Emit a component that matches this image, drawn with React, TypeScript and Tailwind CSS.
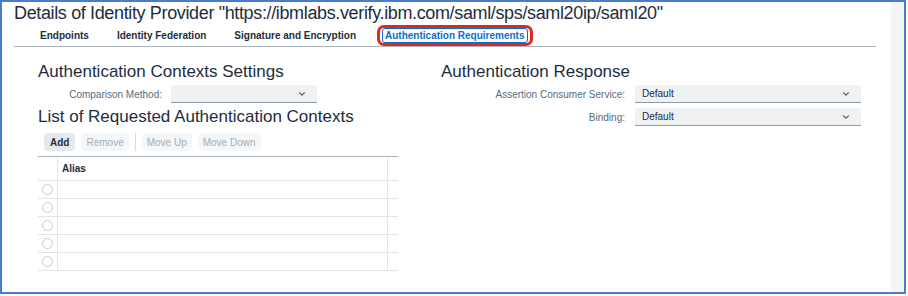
import { ChevronDown } from "lucide-react";

const font = { fontFamily: '"Liberation Sans", Arial, sans-serif' };

function Select({ value, width }: { value?: string; width: string }) {
  return (
    <div
      className={`${width} h-[18px] flex items-center justify-between pl-[7px] pr-[10px] bg-[#eff1f2] border-b border-[#8b9bab] rounded-t-[3px] text-[10px] text-[#1d2d3e]`}
    >
      <span>{value}</span>
      <ChevronDown size={10} strokeWidth={2.5} className="text-[#32363a]" />
    </div>
  );
}

function Tab({ label, active }: { label: string; active?: boolean }) {
  if (active) {
    return (
      <div className="h-[21px] -ml-[7px] flex items-center border-[3px] border-[#e5261a] rounded-[7px] px-[2px]">
        <div className="h-[15px] flex items-center border border-[#0a6ed1] rounded-[3px] px-[2px] text-[#0a6ed1] font-bold">
          {label}
        </div>
      </div>
    );
  }
  return <div className="font-bold text-[#1d2d3e] leading-[13px]">{label}</div>;
}

const rows = [0, 1, 2, 3, 4];

function ToolButton({ label, enabled }: { label: string; enabled?: boolean }) {
  return (
    <div
      className={
        enabled
          ? "h-[18px] px-[6px] flex items-center rounded-[4px] bg-[#e6e9ec] text-[#1d2d3e] font-bold"
          : "h-[18px] px-[5px] flex items-center rounded-[4px] bg-[#f5f6f7] text-[#a3adb8]"
      }
    >
      {label}
    </div>
  );
}

export default function App() {
  return (
    <div className="w-[908px] h-[296px] bg-white" style={font}>
      <div className="w-[906px] h-[294px] border-2 border-[#4a7bd0] flex">
        <div className="flex-1 pl-[12px] pr-[15px]">
          <h1 className="text-[18px] leading-[20px] mt-[1px] text-[#1d2d3e] tracking-[-0.36px]">
            Details of Identity Provider "https://ibmlabs.verify.ibm.com/saml/sps/saml20ip/saml20"
          </h1>
          <div className="mt-[1px] pl-[26px] flex items-center gap-[28px] text-[10px] h-[23px] border-b border-[#a9b4be]">
            <Tab label="Endpoints" />
            <Tab label="Identity Federation" />
            <Tab label="Signature and Encryption" />
            <Tab label="Authentication Requirements" active />
          </div>

          <div className="flex pl-[24px] mt-[15px]">
            <div className="w-[360px]">
              <h2 className="text-[17px] leading-[20px] text-[#1d2d3e]">
                Authentication Contexts Settings
              </h2>
              <div className="flex items-center mt-[3px]">
                <div className="w-[124px] text-right text-[10px] text-[#556b82]">
                  Comparison Method:
                </div>
                <div className="ml-[9px]">
                  <Select width="w-[146px]" />
                </div>
              </div>
              <h2 className="text-[17px] leading-[20px] text-[#1d2d3e] mt-[4px]">
                List of Requested Authentication Contexts
              </h2>
              <div className="flex items-center mt-[6px] pl-[6px] gap-[6px] text-[10px]">
                <ToolButton label="Add" enabled />
                <ToolButton label="Remove" />
                <div className="w-px h-[18px] bg-[#d5dadd]" />
                <ToolButton label="Move Up" />
                <ToolButton label="Move Down" />
              </div>
              <div className="mt-[5px] border-t border-[#a9b4be]">
                <div className="flex h-[24px] border-b border-[#e4e4e4]">
                  <div className="w-[20px] border-r border-[#e4e4e4]" />
                  <div className="w-[330px] border-r border-[#e4e4e4] pl-[4px] flex items-center text-[10px] font-bold text-[#1d2d3e]">
                    Alias
                  </div>
                </div>
                {rows.map((r) => (
                  <div key={r} className="flex h-[18px] border-b border-[#e4e4e4]">
                    <div className="w-[20px] border-r border-[#e4e4e4] flex items-center justify-center">
                      <div className="w-[11px] h-[11px] rounded-full border border-[#c6cbd0] bg-white" />
                    </div>
                    <div className="w-[330px] border-r border-[#e4e4e4]" />
                  </div>
                ))}
              </div>
            </div>

            <div className="ml-[43px]">
              <h2 className="text-[17px] leading-[20px] text-[#1d2d3e]">Authentication Response</h2>
              <div className="flex items-center mt-[3px]">
                <div className="w-[184px] text-right text-[10px] text-[#556b82]">
                  Assertion Consumer Service:
                </div>
                <div className="ml-[10px]">
                  <Select value="Default" width="w-[226px]" />
                </div>
              </div>
              <div className="flex items-center mt-[5px]">
                <div className="w-[184px] text-right text-[10px] text-[#556b82]">Binding:</div>
                <div className="ml-[10px]">
                  <Select value="Default" width="w-[226px]" />
                </div>
              </div>
            </div>
          </div>
        </div>
        <div className="w-[13px] bg-[#f3f4f6] rounded-bl-[3px]" />
      </div>
    </div>
  );
}
